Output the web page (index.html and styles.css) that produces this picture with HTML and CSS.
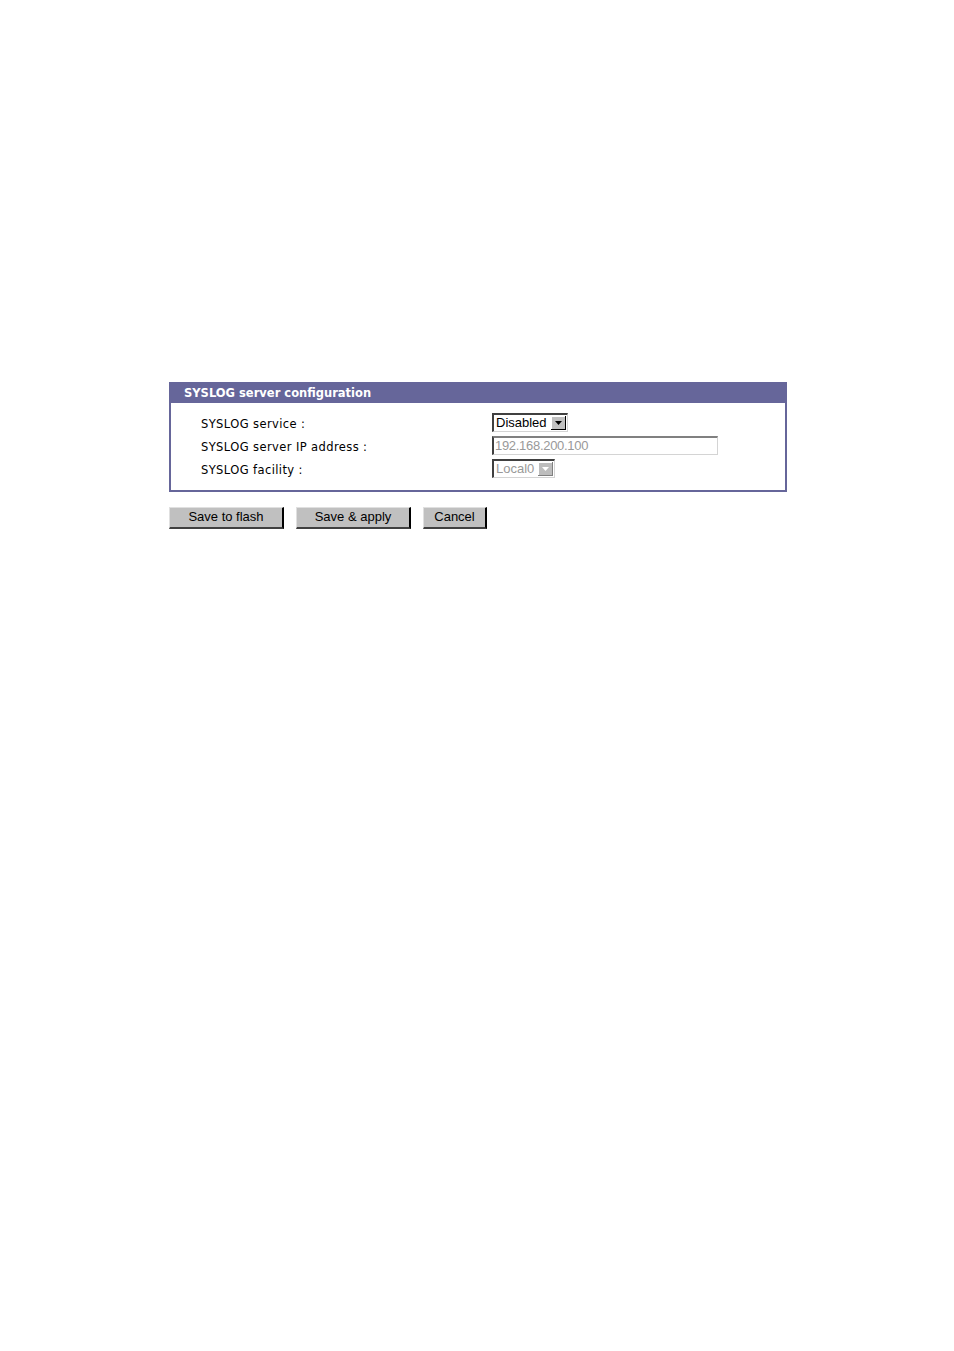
FILE: index.html
```html
<!DOCTYPE html>
<html>
<head>
<meta charset="utf-8">
<link rel="stylesheet" href="styles.css">
</head>
<body>
<div class="page">
  <div class="panel">
    <div class="panel-head">SYSLOG server configuration</div>
    <div class="panel-body">
      <div class="row">
        <div class="label">SYSLOG service :</div>
        <div class="ctl">
          <div class="select sel-service"><span class="val">Disabled</span><span class="arrow"><svg width="7" height="4" viewBox="0 0 7 4"><path d="M0 0H7L3.5 4Z" fill="#000"/></svg></span></div>
        </div>
      </div>
      <div class="row">
        <div class="label">SYSLOG server IP address :</div>
        <div class="ctl">
          <div class="input">192.168.200.100</div>
        </div>
      </div>
      <div class="row">
        <div class="label">SYSLOG facility :</div>
        <div class="ctl">
          <div class="select sel-fac disabled"><span class="val">Local0</span><span class="arrow"><svg width="7" height="4" viewBox="0 0 7 4"><path d="M0 0H7L3.5 4Z" fill="#fff"/></svg></span></div>
        </div>
      </div>
    </div>
  </div>
  <div class="buttons">
    <div class="btn b1">Save to flash</div>
    <div class="btn b2">Save &amp; apply</div>
    <div class="btn b3">Cancel</div>
  </div>
</div>
</body>
</html>
```
FILE: styles.css
```css
html, body { margin: 0; padding: 0; background: #fff; }
body { font-family: "DejaVu Sans", Verdana, sans-serif; color: #000; }
.page { padding: 382px 0 0 169px; }
.panel { width: 614px; border: 2px solid #66669a; border-top: 0; }
.panel-head { background: #66669a; color: #fff; font-weight: bold; font-size: 11.5px; height: 21px; line-height: 23px; padding-left: 13px; letter-spacing: 0; }
.panel-body { padding: 8px 0 10px 30px; }
.row { display: flex; align-items: center; height: 23px; }
.label { width: 291px; font-size: 11.5px; letter-spacing: 0.4px; padding-top: 2px; }
.ctl { display: flex; align-items: center; }
.select { display: flex; align-items: stretch; height: 19px; box-sizing: border-box; border-top: 2px solid #404040; border-left: 2px solid #404040; border-right: 1px solid #d4d4d4; border-bottom: 1px solid #d4d4d4; background: #fff; }
.select .val { font-family: "Liberation Sans", Arial, sans-serif; font-size: 13px; line-height: 15px; padding: 0 2px 0 2px; }
.select .arrow { width: 15px; background: #c0c0c0; display: flex; align-items: center; justify-content: center; border-right: 1px solid #000; border-bottom: 1px solid #000; box-shadow: inset 1px 1px 0 #fff; margin: 1px; box-sizing: border-box; }
.sel-service { width: 76px; }
.sel-service .val { flex: 1; }
.sel-fac { width: 63px; }
.sel-fac .val { flex: 1; color: #999; }
.sel-fac .arrow { background: #bdbdbd; border-right-color: #808080; border-bottom-color: #808080; }
.input { width: 226px; height: 19px; box-sizing: border-box; border-top: 2px solid #808080; border-left: 2px solid #404040; border-right: 1px solid #d4d4d4; border-bottom: 1px solid #d4d4d4; font-family: "Liberation Sans", Arial, sans-serif; font-size: 13px; line-height: 15px; color: #999; padding-left: 1px; letter-spacing: -0.3px; }
.buttons { display: flex; gap: 12px; margin-top: 15px; }
.btn { height: 22px; box-sizing: border-box; background: #c0c0c0; border-right: 2px solid #000; border-bottom: 2px solid #404040; border-top: 1px solid #e0e0e0; border-left: 1px solid #e0e0e0; font-family: "Liberation Sans", Arial, sans-serif; font-size: 13px; line-height: 17px; text-align: center; }
.b1 { width: 115px; }
.b2 { width: 115px; }
.b3 { width: 64px; }
```
